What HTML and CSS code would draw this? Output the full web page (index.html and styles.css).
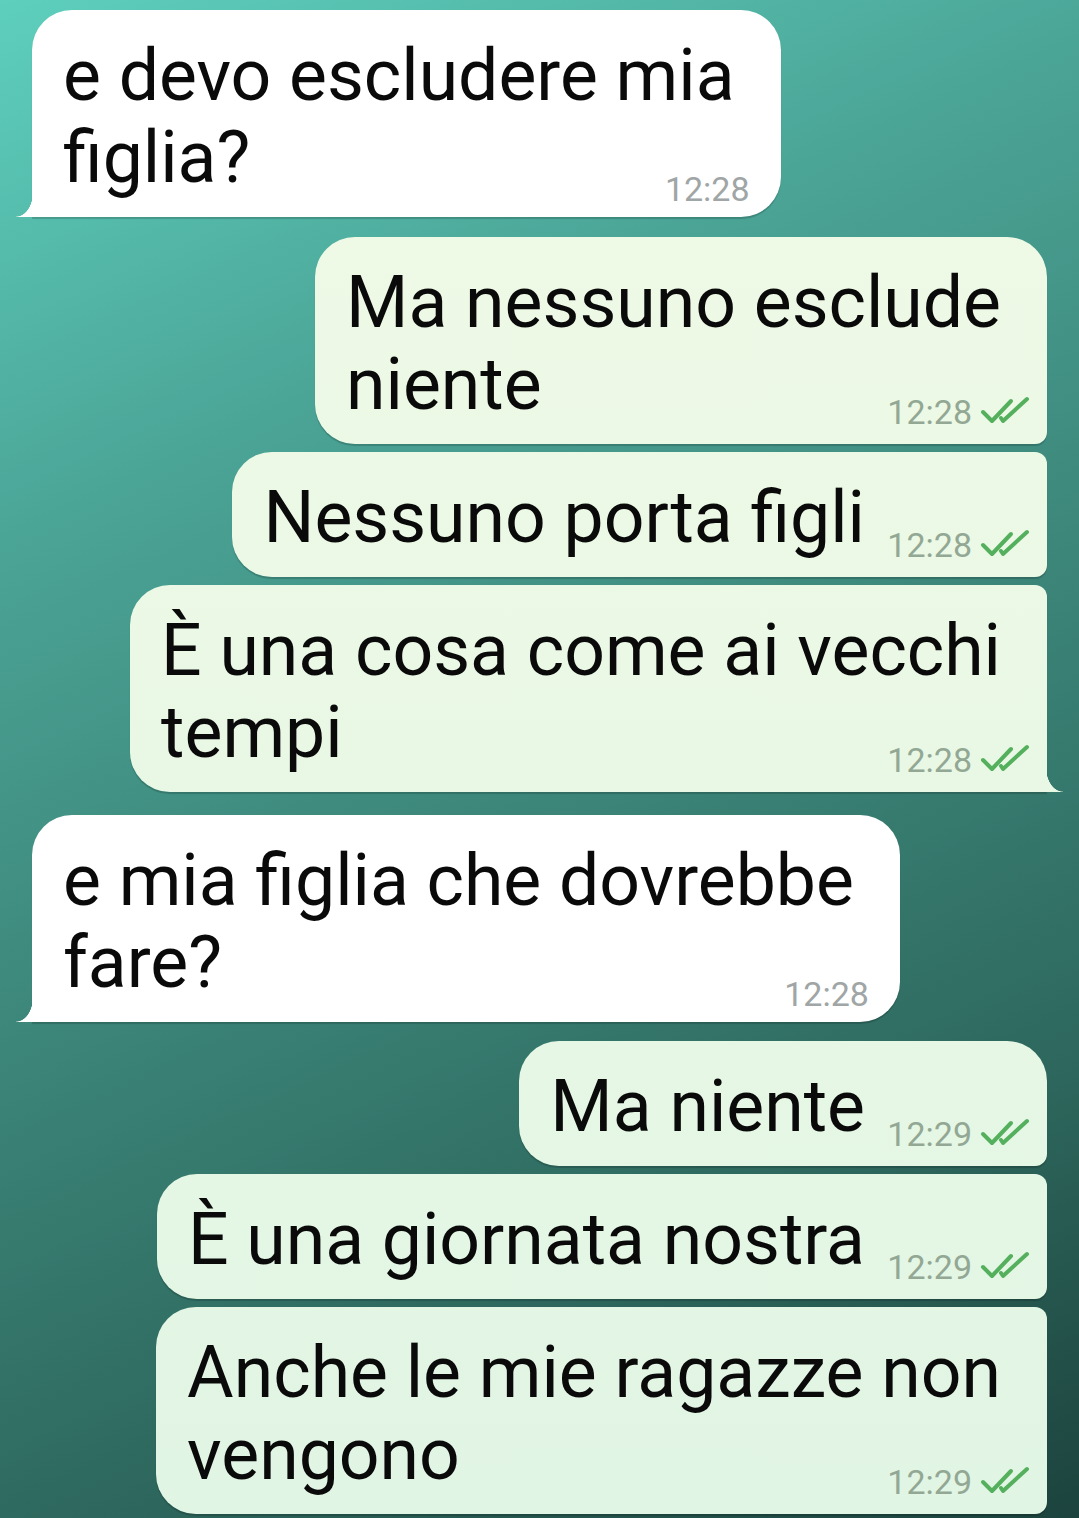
FILE: index.html
```html
<!DOCTYPE html>
<html lang="it">
<head>
  <meta charset="UTF-8" />
  <meta name="viewport" content="width=device-width, initial-scale=1.0" />
  <title>Chat</title>
  <link rel="stylesheet" href="styles.css">
</head>
<body>
  <div class="chat">
    <div class="bubble in tail">
      <p class="text">e devo escludere mia<br>figlia?<span class="spacer"></span></p>
      <span class="meta"><span class="time">12:28</span></span>
    </div>

    <div class="bubble out first group">
      <p class="text">Ma nessuno esclude<br>niente<span class="spacer"></span></p>
      <span class="meta"><span class="time">12:28</span><svg class="ticks" viewBox="0 0 50 28"><path d="M3 16 L12 25 L31 5" /><path d="M21 22 L23 25 L47 3" /></svg></span>
    </div>
    <div class="bubble out">
      <p class="text">Nessuno porta figli<span class="spacer"></span></p>
      <span class="meta"><span class="time">12:28</span><svg class="ticks" viewBox="0 0 50 28"><path d="M3 16 L12 25 L31 5" /><path d="M21 22 L23 25 L47 3" /></svg></span>
    </div>
    <div class="bubble out tail">
      <p class="text">È una cosa come ai vecchi<br>tempi<span class="spacer"></span></p>
      <span class="meta"><span class="time">12:28</span><svg class="ticks" viewBox="0 0 50 28"><path d="M3 16 L12 25 L31 5" /><path d="M21 22 L23 25 L47 3" /></svg></span>
    </div>

    <div class="bubble in tail group wide-gap">
      <p class="text">e mia figlia che dovrebbe<br>fare?<span class="spacer"></span></p>
      <span class="meta"><span class="time">12:28</span></span>
    </div>

    <div class="bubble out first group tight">
      <p class="text">Ma niente<span class="spacer"></span></p>
      <span class="meta"><span class="time">12:29</span><svg class="ticks" viewBox="0 0 50 28"><path d="M3 16 L12 25 L31 5" /><path d="M21 22 L23 25 L47 3" /></svg></span>
    </div>
    <div class="bubble out">
      <p class="text">È una giornata nostra<span class="spacer"></span></p>
      <span class="meta"><span class="time">12:29</span><svg class="ticks" viewBox="0 0 50 28"><path d="M3 16 L12 25 L31 5" /><path d="M21 22 L23 25 L47 3" /></svg></span>
    </div>
    <div class="bubble out">
      <p class="text">Anche le mie ragazze non<br>vengono<span class="spacer"></span></p>
      <span class="meta"><span class="time">12:29</span><svg class="ticks" viewBox="0 0 50 28"><path d="M3 16 L12 25 L31 5" /><path d="M21 22 L23 25 L47 3" /></svg></span>
    </div>
  </div>
</body>
</html>
```

FILE: styles.css
```css
html, body {
  margin: 0;
  height: 100%;
}
body {
  font-family: Roboto, "Noto Sans", sans-serif;
  background: linear-gradient(155deg, #5ecfbd 0%, #4aa395 28%, #3c8679 52%, #2d665c 78%, #1c433d 100%);
  background-attachment: fixed;
  overflow: hidden;
}
.chat {
  display: flex;
  flex-direction: column;
  gap: 8px;
  padding: 10px 32px;
}
.group {
  margin-top: 12px;
}
.wide-gap {
  margin-top: 15px;
}
.tight {
  margin-top: 11px;
}
.bubble {
  position: relative;
  padding: 25px 46px 18px 31px;
  border-radius: 40px 12px 12px 40px;
  box-shadow: 0 2px 1px rgba(0, 0, 0, 0.18);
}
.bubble.in {
  align-self: flex-start;
  background: #ffffff;
  border-radius: 40px 40px 40px 0;
}
.bubble.out {
  align-self: flex-end;
  background: linear-gradient(180deg, #f0fae6 0%, #e9f8e5 50%, #e1f5e4 100%);
  background-attachment: fixed;
}
.bubble.out.first {
  border-top-right-radius: 40px;
}
.bubble.out.tail {
  border-bottom-right-radius: 0;
}
.text {
  margin: 0;
  font-size: 71.5px;
  line-height: 82px;
  color: #0a0a0a;
  white-space: nowrap;
}
.spacer {
  display: inline-block;
  width: 136px;
}
.in .spacer {
  width: 100px;
}
.bubble.tail::before {
  content: '';
  position: absolute;
  bottom: 0;
  width: 17px;
  height: 24px;
  background: inherit;
}
.bubble.in.tail::before {
  left: -16px;
  -webkit-mask-image: radial-gradient(ellipse 17px 24px at 0 0, transparent 97%, #000 100%);
  mask-image: radial-gradient(ellipse 17px 24px at 0 0, transparent 97%, #000 100%);
}
.bubble.out.tail::before {
  right: -16px;
  -webkit-mask-image: radial-gradient(ellipse 17px 24px at 100% 0, transparent 97%, #000 100%);
  mask-image: radial-gradient(ellipse 17px 24px at 100% 0, transparent 97%, #000 100%);
}
.meta {
  position: absolute;
  display: flex;
  align-items: flex-end;
  gap: 8px;
  right: 17px;
  bottom: 15px;
}
.in .meta {
  right: 31px;
  bottom: 11px;
}
.time {
  font-size: 34px;
  line-height: 1;
  color: #93a894;
}
.in .time {
  color: #a0a5a5;
}
.ticks {
  width: 50px;
  height: 28px;
  margin-bottom: 5px;
  fill: none;
  stroke: #55b05e;
  stroke-width: 4;
  stroke-linecap: round;
  stroke-linejoin: round;
}
```
